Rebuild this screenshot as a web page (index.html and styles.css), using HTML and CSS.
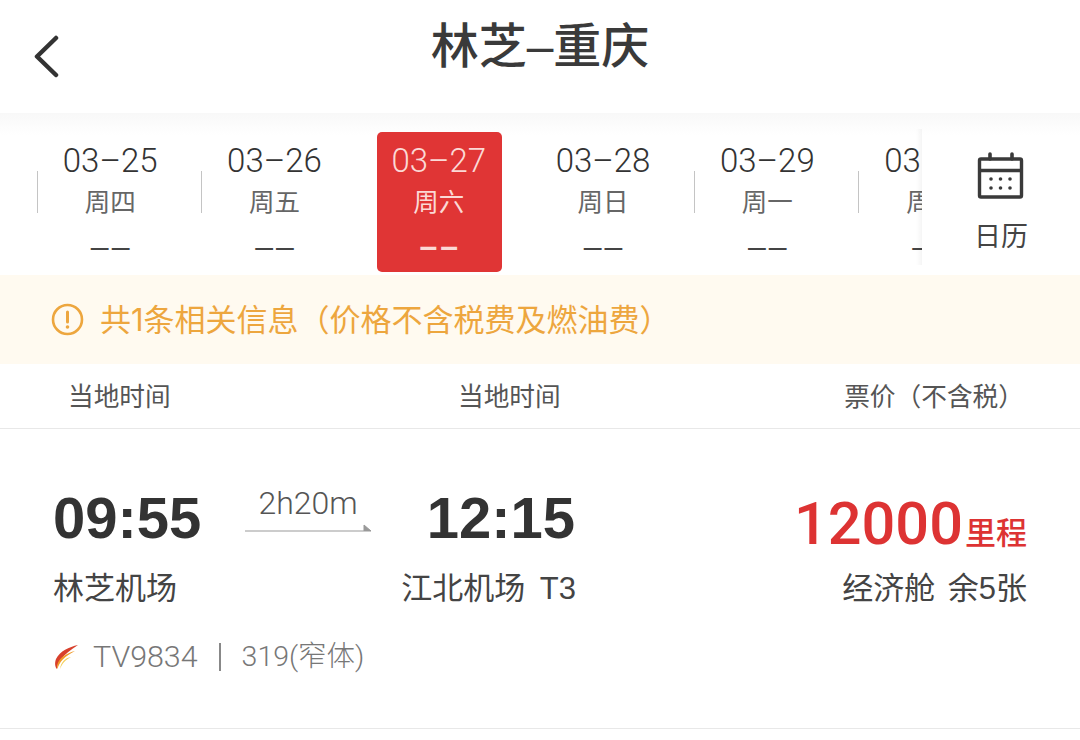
FILE: index.html
```html
<!DOCTYPE html>
<html lang="zh-CN">
<head>
<meta charset="utf-8">
<title>林芝-重庆</title>
<link rel="stylesheet" href="styles.css">
</head>
<body>
<div class="page">
  <header class="topbar">
    <svg class="back" width="28" height="46" viewBox="0 0 28 46"><path d="M22 3 L3 21.500 L22 40" fill="none" stroke="#333" stroke-width="4.500" stroke-linecap="round" stroke-linejoin="round"/></svg>
    <h1 class="title">林芝<span class="title-dash">–</span>重庆</h1>
  </header>
  <section class="strip">
    <div class="dates">
      <div class="date sep"><div class="day">03–25</div><div class="week">周四</div><div class="fare">––</div></div>
      <div class="date sep"><div class="day">03–26</div><div class="week">周五</div><div class="fare">––</div></div>
      <div class="date active"><div class="day">03–27</div><div class="week">周六</div><div class="fare">––</div></div>
      <div class="date"><div class="day">03–28</div><div class="week">周日</div><div class="fare">––</div></div>
      <div class="date sep"><div class="day">03–29</div><div class="week">周一</div><div class="fare">––</div></div>
      <div class="date sep"><div class="day">03–30</div><div class="week">周二</div><div class="fare">––</div></div>
    </div>
    <div class="calendar">
      <svg width="48" height="48" viewBox="0 0 48 48"><g fill="none" stroke="#3a3a3a" stroke-width="3.4" stroke-linejoin="round"><rect x="2.5" y="7" width="42" height="38" rx="1.5"/><path d="M2.5 18.500 H44.500"/></g><path d="M13 7V2M35 7V2" stroke="#3a3a3a" stroke-width="3.600" stroke-linecap="round"/><g fill="#3a3a3a"><circle cx="14" cy="27" r="1.800"/><circle cx="23.500" cy="27" r="1.800"/><circle cx="33" cy="27" r="1.800"/><circle cx="14" cy="36" r="1.800"/><circle cx="23.500" cy="36" r="1.800"/><circle cx="33" cy="36" r="1.800"/></g></svg>
      <span class="cal-label">日历</span>
    </div>
  </section>
  <section class="notice">
    <svg width="33" height="33" viewBox="0 0 33 33"><circle cx="16.500" cy="16.500" r="14.500" fill="none" stroke="#eda63e" stroke-width="2.600"/><path d="M16.500 9 V19" stroke="#eda63e" stroke-width="3" stroke-linecap="round"/><circle cx="16.500" cy="24" r="1.800" fill="#eda63e"/></svg>
    <span class="notice-text">共1条相关信息（价格不含税费及燃油费）</span>
  </section>
  <section class="thead">
    <span>当地时间</span>
    <span>当地时间</span>
    <span class="thead-price">票价（不含税）</span>
  </section>
  <section class="flight">
    <div class="time">09:55</div>
    <div class="duration">
      <span class="dur-text">2h20m</span>
      <svg width="126" height="8" viewBox="0 0 126 8"><path d="M0 7 H126 L119 1 V7" fill="#999" stroke="#999" stroke-width="1"/></svg>
    </div>
    <div class="time time-arr">12:15</div>
    <div class="price"><span class="miles">12000</span><span class="miles-unit">里程</span></div>
    <div class="airport">林芝机场</div>
    <div class="airport airport-arr">江北机场 T3</div>
    <div class="cabin">经济舱 余5张</div>
    <div class="meta">
      <svg width="26" height="26" viewBox="0 0 26 26"><path d="M25 1 C16 3 7 7 3 15 C1.500 19 2 23 4 25 C4 19 9 11 25 1Z" fill="#d8402c"/><path d="M22 7 C14 9 7 13 4.500 20 C4 22 4 24 4.500 25 C6 18 12 12 22 7Z" fill="#f09a28"/><path d="M18 13 C12 14 8 18 7 25 C9 20 12 16 18 13Z" fill="#f3cf5a"/></svg>
      <span class="flight-no">TV9834</span>
      <span class="bar"></span>
      <span class="plane">319(窄体)</span>
    </div>
  </section>
</div>
</body>
</html>
```

FILE: styles.css
```css
* { box-sizing: border-box; }
html, body { margin: 0; padding: 0; }
body {
  background: #fff;
  color: #333;
  font-family: "Liberation Sans", "Noto Sans CJK SC", sans-serif;
}
.page { width: 1080px; height: 740px; overflow: hidden; }

.topbar {
  height: 113px;
  display: flex;
  align-items: flex-start;
  justify-content: center;
  position: relative;
}
.back { position: absolute; left: 34px; top: 35px; }
.title {
  margin: 12px 0 0;
  font-size: 48px;
  line-height: 70px;
  font-weight: 500;
  color: #3a3a3a;
}
.title-dash { font-weight: 400; }

.strip {
  height: 162px;
  display: flex;
  background: linear-gradient(#f8f8f8, #fff 22px);
}
.dates {
  flex: 1;
  min-width: 0;
  display: flex;
  overflow: hidden;
  padding: 19px 0 0 28px;
}
.date {
  flex: 0 0 164.3px;
  height: 140px;
  text-align: center;
  position: relative;
}
.date.sep::before {
  content: "";
  position: absolute;
  left: 9px;
  top: 39px;
  width: 1px;
  height: 42px;
  background: #c4c4c4;
}
.day { font-family: Roboto, sans-serif; font-weight: 300; font-size: 33px; line-height: 36px; margin-top: 11px; color: #333; }
.week { font-size: 25.500px; line-height: 36px; margin-top: 5px; color: #666; }
.fare { font-size: 32px; line-height: 32px; margin-top: 10px; letter-spacing: 3px; padding-left: 3px; color: #444; }
.active { color: #fff; }
.active::before {
  content: "";
  position: absolute;
  inset: 0 19px 0 20.300px;
  background: #e03535;
  border-radius: 5px;
}
.active > div { position: relative; color: #fbd9d6; }
.active .fare { font-weight: 700; }

.calendar {
  flex: 0 0 158px;
  display: flex;
  flex-direction: column;
  align-items: center;
  padding-top: 39px;
  background: linear-gradient(#f8f8f8, #fff 22px);
  position: relative;
}
.calendar::before {
  content: "";
  position: absolute;
  left: -6px;
  top: 16px;
  bottom: 10px;
  width: 6px;
  background: linear-gradient(to right, rgba(0,0,0,0), rgba(0,0,0,.04));
}
.calendar svg { display: block; margin-left: -1px; }
.cal-label { font-size: 27px; line-height: 40px; margin-top: 17px; color: #444; }

.notice {
  height: 89px;
  background: #fffaf0;
  display: flex;
  align-items: center;
  padding-left: 51px;
  gap: 16px;
}
.notice-text { font-family: Inter, "Noto Sans CJK SC", sans-serif; font-size: 31px; color: #eda63e; line-height: 40px; }

.thead {
  height: 65px;
  border-bottom: 1px solid #e8e8e8;
  display: grid;
  grid-template-columns: 390px auto 1fr;
  align-items: center;
  padding: 0 56px 4px 68px;
  font-size: 25.700px;
  color: #555;
}
.thead-price { text-align: right; }

.flight {
  height: 300px;
  border-bottom: 1px solid #e8e8e8;
  display: grid;
  grid-template-columns: 192px 126px 204px 1fr;
  grid-template-rows: 64px 70px auto;
  align-content: start;
  padding: 57px 53px 0 53px;
}
.time {
  font-size: 58px;
  line-height: 64px;
  font-weight: 700;
  color: #333;
}
.time-arr { text-align: right; }
.duration { display: flex; flex-direction: column; align-items: center; }
.dur-text { font-family: Roboto, sans-serif; font-weight: 300; font-size: 32px; line-height: 34px; color: #555; }
.duration svg { display: block; margin-top: 4px; }
.price {
  text-align: right;
  color: #dd3333;
  line-height: 64px;
  padding-top: 6px;
  white-space: nowrap;
}
.miles { font-family: Roboto, sans-serif; font-weight: 500; font-size: 59.500px; }
.miles-unit { font-size: 31px; font-weight: 500; margin-left: 2px; }
.airport { font-size: 31px; line-height: 62px; color: #444; white-space: nowrap; padding-top: 8px; }
.airport-arr { grid-column: 3; text-align: right; word-spacing: 6px; margin-right: -1px; }
.cabin { font-size: 31px; line-height: 62px; padding-top: 8px; color: #444; text-align: right; white-space: nowrap; word-spacing: 4px; }
.meta {
  grid-column: 1 / -1;
  display: flex;
  align-items: center;
  height: 44px;
  margin-top: 15px;
  font-size: 30px;
  line-height: 40px;
  color: #777;
}
.flight-no { margin-left: 14px; font-family: Roboto, sans-serif; font-weight: 300; font-size: 30.400px; }
.bar { width: 2px; height: 28px; background: #888; margin: 0 21px; }
.plane { font-family: Roboto, "Noto Sans CJK SC", sans-serif; font-weight: 300; font-size: 28.500px; }
```
